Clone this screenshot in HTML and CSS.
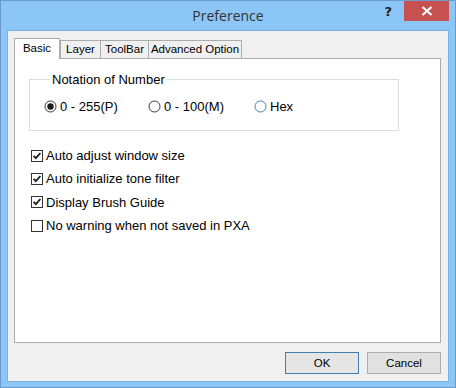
FILE: index.html
```html
<!DOCTYPE html>
<html>
<head>
<meta charset="utf-8">
<link rel="stylesheet" href="styles.css">
</head>
<body>
<div class="window">
  <div class="titlebar">
    <div></div>
    <div class="title">Preference</div>
    <div class="caption-buttons">
      <span class="help">?</span>
      <span class="close">
        <svg width="12" height="10" viewBox="0 0 12 10"><path d="M1.5 1 L10.5 9 M10.5 1 L1.5 9" stroke="#fff" stroke-width="2.2"/></svg>
      </span>
    </div>
  </div>
  <div class="client">
    <div class="tabs">
      <div class="tab active">Basic</div>
      <div class="tab">Layer</div>
      <div class="tab">ToolBar</div>
      <div class="tab">Advanced Option</div>
    </div>
    <div class="panel">
      <fieldset class="group">
        <legend>Notation of Number</legend>
        <div class="radios">
          <label class="opt">
            <svg width="13" height="13" viewBox="0 0 13 13"><circle cx="6.5" cy="6.5" r="5.5" fill="#fff" stroke="#333"/><circle cx="6.5" cy="6.5" r="3.2" fill="#1b1b1b"/></svg>
            <span>0 - 255(P)</span>
          </label>
          <label class="opt">
            <svg width="13" height="13" viewBox="0 0 13 13"><circle cx="6.5" cy="6.5" r="5.5" fill="#fff" stroke="#333"/></svg>
            <span>0 - 100(M)</span>
          </label>
          <label class="opt">
            <svg width="13" height="13" viewBox="0 0 13 13"><circle cx="6.5" cy="6.5" r="5.5" fill="#fff" stroke="#3c7fb1"/></svg>
            <span>Hex</span>
          </label>
        </div>
      </fieldset>
      <div class="checks">
        <label class="chk">
          <svg width="12" height="12" viewBox="0 0 12 12"><rect x="0.5" y="0.5" width="11" height="11" fill="#fff" stroke="#333"/><path d="M2.6 5.8 L4.9 8.2 L9.4 3" fill="none" stroke="#1b1b1b" stroke-width="1.8"/></svg>
          <span>Auto adjust window size</span>
        </label>
        <label class="chk">
          <svg width="12" height="12" viewBox="0 0 12 12"><rect x="0.5" y="0.5" width="11" height="11" fill="#fff" stroke="#333"/><path d="M2.6 5.8 L4.9 8.2 L9.4 3" fill="none" stroke="#1b1b1b" stroke-width="1.8"/></svg>
          <span>Auto initialize tone filter</span>
        </label>
        <label class="chk">
          <svg width="12" height="12" viewBox="0 0 12 12"><rect x="0.5" y="0.5" width="11" height="11" fill="#fff" stroke="#333"/><path d="M2.6 5.8 L4.9 8.2 L9.4 3" fill="none" stroke="#1b1b1b" stroke-width="1.8"/></svg>
          <span>Display Brush Guide</span>
        </label>
        <label class="chk">
          <svg width="12" height="12" viewBox="0 0 12 12"><rect x="0.5" y="0.5" width="11" height="11" fill="#fff" stroke="#333"/></svg>
          <span>No warning when not saved in PXA</span>
        </label>
      </div>
    </div>
    <div class="buttons">
      <button class="btn default">OK</button>
      <button class="btn">Cancel</button>
    </div>
  </div>
</div>
</body>
</html>
```

FILE: styles.css
```css
html, body {
  margin: 0;
  padding: 0;
}
body {
  width: 456px;
  height: 388px;
  overflow: hidden;
  font-family: "Liberation Sans", Arial, sans-serif;
}
.window {
  box-sizing: border-box;
  width: 456px;
  height: 388px;
  border: 1px solid #6c9bcb;
  background: #8bc6f6;
  display: flex;
  flex-direction: column;
}
.titlebar {
  height: 29px;
  display: grid;
  grid-template-columns: 1fr auto 1fr;
  align-items: start;
}
.title {
  font-family: "Open Sans", sans-serif;
  font-size: 14px;
  color: #333;
  line-height: 29px;
}
.caption-buttons {
  display: flex;
  justify-content: flex-end;
  align-items: flex-start;
  padding-right: 6px;
}
.help {
  font-family: "DejaVu Sans", sans-serif;
  font-weight: bold;
  font-size: 13px;
  color: #222;
  line-height: 20px;
  margin-right: 12px;
  margin-top: 1px;
}
.close {
  width: 45px;
  height: 20px;
  background: #c75050;
  display: flex;
  align-items: center;
  justify-content: center;
}
.client {
  flex: 1;
  margin: 0 6px 6px;
  border: 1px solid #7bb0e2;
  background: #f0f0f0;
  padding: 7px 7px 7px 6px;
  display: flex;
  flex-direction: column;
}
.tabs {
  display: flex;
  align-items: flex-start;
  height: 20px;
  position: relative;
  z-index: 1;
  font-size: 11.5px;
  color: #000;
}
.tab {
  box-sizing: border-box;
  height: 18px;
  margin-top: 2px;
  margin-left: -1px;
  padding: 2px 5px 0;
  border: 1px solid #acacac;
  border-bottom: none;
  background: #f0f0f0;
  white-space: nowrap;
}
.tab.active {
  height: 21px;
  margin-top: 0;
  margin-left: 0;
  width: 46px;
  text-align: center;
  padding: 3px 0 0;
  background: #fff;
  margin-right: 1px;
}
.tab:nth-child(2) { width: 41px; text-align: center; padding: 2px 0 0; }
.tab:nth-child(3) { width: 49px; text-align: center; padding: 2px 0 0; }
.tab:nth-child(4) { width: 94px; text-align: center; padding: 2px 0 0; }
.panel {
  box-sizing: border-box;
  width: 427px;
  height: 285px;
  border: 1px solid #acacac;
  background: #fff;
  padding: 13px 0 0 14px;
  font-size: 13px;
  color: #000;
}
.group {
  box-sizing: border-box;
  width: 370px;
  height: 59px;
  margin: 0;
  padding: 12px 0 0 14px;
  border: 1px solid #dcdcdc;
}
.group legend {
  padding: 0 2px;
  margin-left: 6px;
  line-height: 15px;
}
.radios {
  display: grid;
  grid-template-columns: 104px 106px auto;
  align-items: center;
}
.opt, .chk {
  display: flex;
  align-items: center;
  gap: 3px;
  white-space: nowrap;
}
.opt svg, .chk svg {
  flex: none;
}
.checks {
  display: flex;
  flex-direction: column;
  padding: 13px 0 0 2px;
}
.chk {
  height: 23.3px;
}
.buttons {
  display: flex;
  justify-content: flex-end;
  gap: 8px;
  margin-top: 9px;
}
.btn {
  box-sizing: border-box;
  width: 74px;
  height: 22px;
  margin: 0;
  padding: 0;
  border: 1px solid #adadad;
  background: #e1e1e1;
  font-family: "Liberation Sans", Arial, sans-serif;
  font-size: 11.5px;
  color: #000;
}
.btn.default {
  border-color: #3c7fb1;
  background: #e5e5e5;
}
```
